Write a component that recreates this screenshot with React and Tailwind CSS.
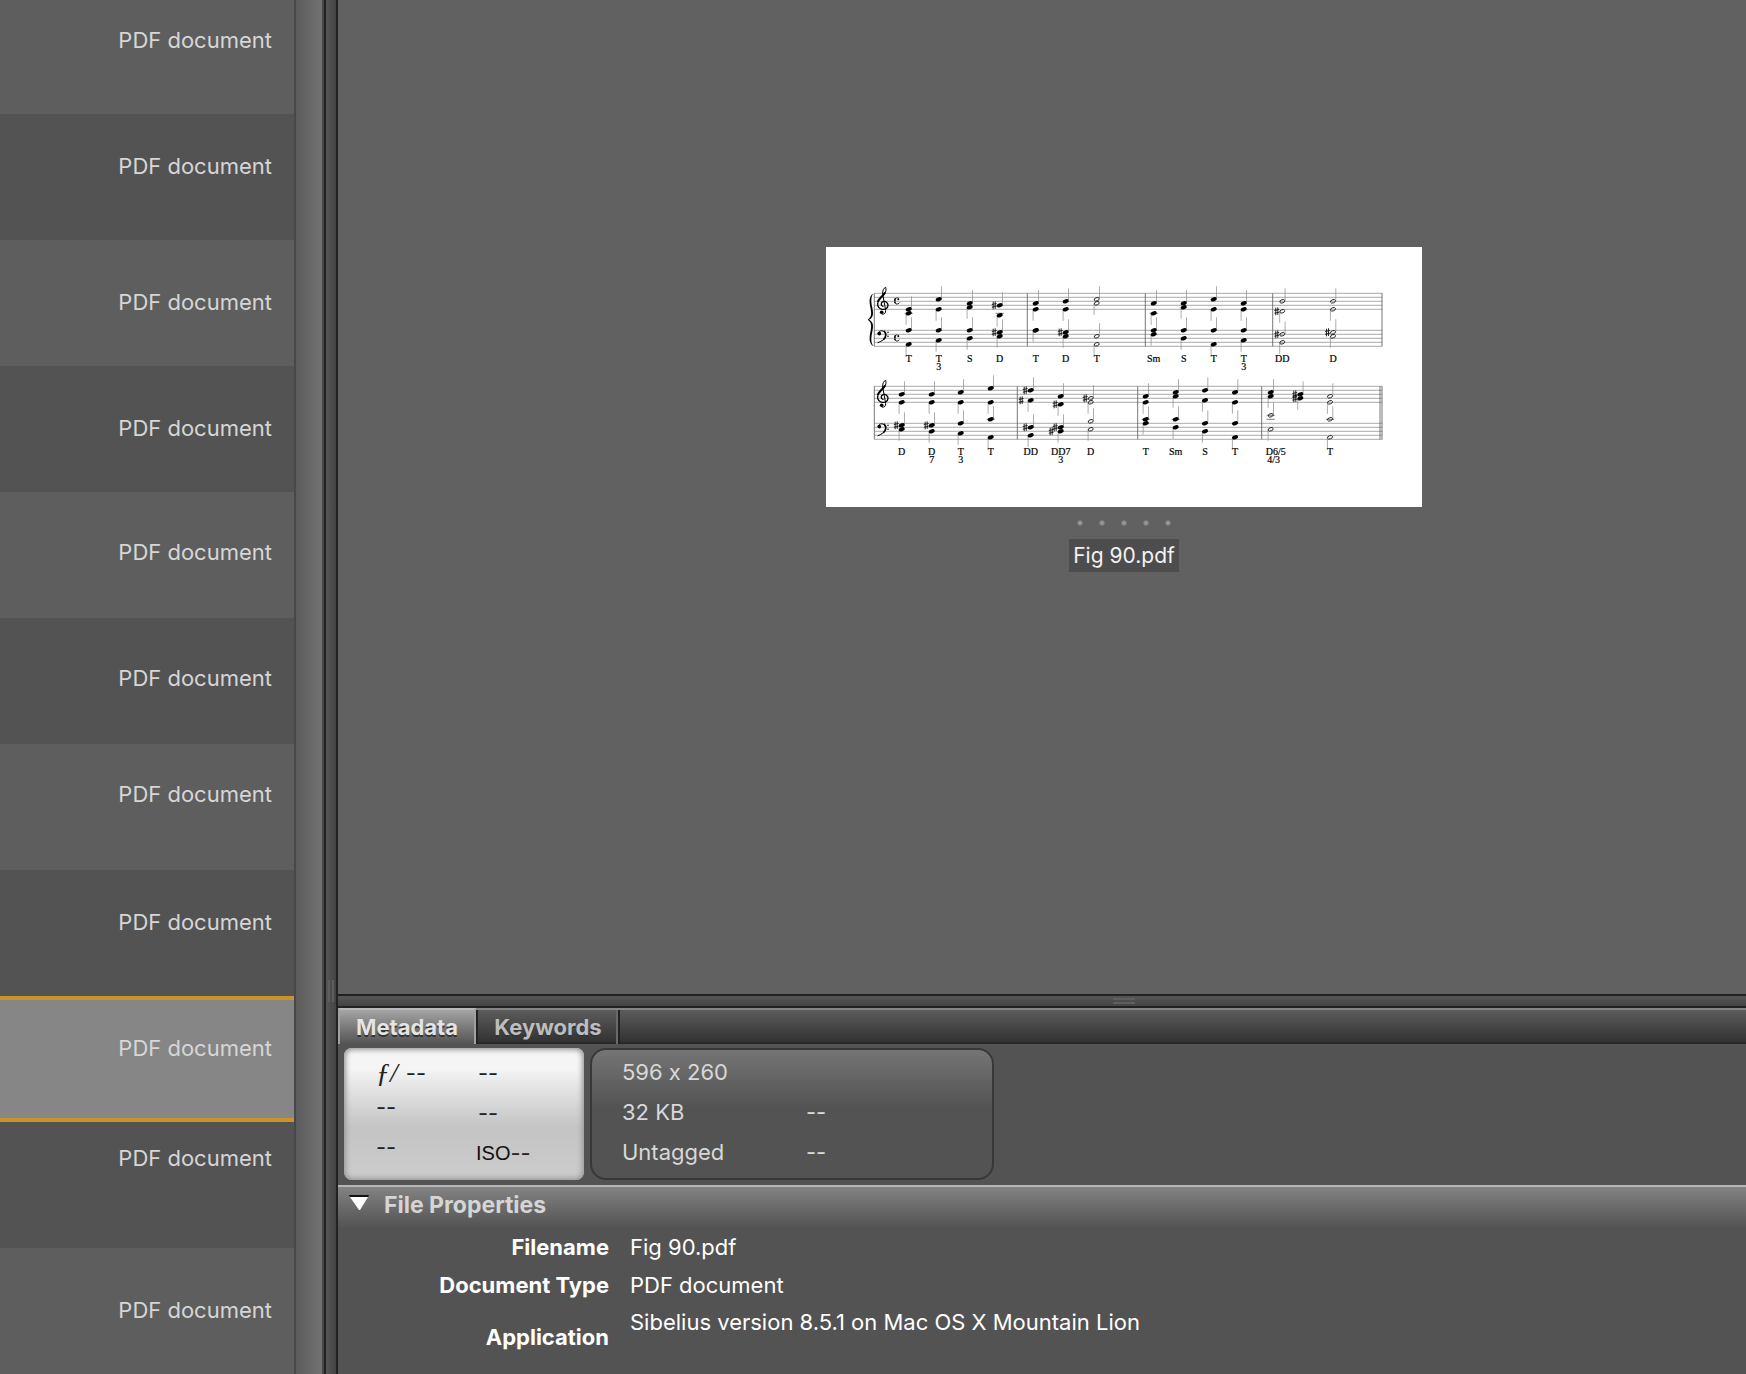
import React from 'react'
import clsx from 'clsx'

const rows = [
    { id: 1, pad: "pt-[40px]", shade: "bg-[#5e5e5e]" },
    { id: 2, pad: "pt-[40px]", shade: "bg-[#535353]" },
    { id: 3, pad: "pt-[50px]", shade: "bg-[#5e5e5e]" },
    { id: 4, pad: "pt-[50px]", shade: "bg-[#535353]" },
    { id: 5, pad: "pt-[48px]", shade: "bg-[#5e5e5e]" },
    { id: 6, pad: "pt-[48px]", shade: "bg-[#535353]" },
    { id: 7, pad: "pt-[38px]", shade: "bg-[#5e5e5e]" },
    { id: 8, pad: "pt-[40px]", shade: "bg-[#535353]" },
    { id: 9, pad: "pt-[36px]", selected: true },
    { id: 10, pad: "pt-[24px]", shade: "bg-[#535353]" },
    { id: 11, pad: "pt-[50px]", shade: "bg-[#5e5e5e]" },
]

// Each chord: x, treble [upper, lower], bass [upper, lower], labels.
// A note is its position below the top line in half spaces; '#' marks a sharp, '##' a sharp set further left.
const systems = [
    {
        top: 46.3,
        bars: [201.3, 319.3, 446.7, 556],
        chords: [
            { x: 82.7, t: [[8], [10]], b: [[0], [7]], l: ["T"] },
            { x: 112.7, t: [[3], [8]], b: [[0], [5]], l: ["T", "3"] },
            { x: 143.7, t: [[5], [7]], b: [[0], [4]], l: ["S"] },
            { x: 173.7, t: [[6, "#"], [11]], b: [[1, "#"], [3]], l: ["D"] },
            { x: 209.7, t: [[5], [8]], b: [[0], [0]], l: ["T"], bassDown: true },
            { x: 239.7, t: [[4], [8]], b: [[1, "#"], [3]], l: ["D"] },
            { x: 270.7, half: true, t: [[3], [5]], b: [[3], [7]], l: ["T"] },
            { x: 327.7, t: [[5], [10]], b: [[0], [2]], l: ["Sm"] },
            { x: 357.7, t: [[5], [7]], b: [[0], [4]], l: ["S"] },
            { x: 387.7, t: [[3], [8]], b: [[0], [7]], l: ["T"] },
            { x: 417.7, t: [[5], [8]], b: [[0], [5]], l: ["T", "3"] },
            { x: 456.3, half: true, t: [[4], [9, "#"]], b: [[2, "#"], [6]], l: ["DD"] },
            { x: 507, half: true, t: [[4], [8]], b: [[1, "#"], [3]], l: ["D"] },
        ],
    },
    {
        top: 139.3,
        bars: [191.3, 311.7, 435.7, 554, 556],
        chords: [
            { x: 75.7, t: [[4], [8]], b: [[1, "#"], [3]], l: ["D"] },
            { x: 105.7, t: [[4], [8]], b: [[1, "#"], [4]], l: ["D", "7"] },
            { x: 134.7, t: [[3], [8]], b: [[0], [5]], l: ["T", "3"] },
            { x: 164.7, t: [[1], [8]], b: [[-2], [7]], l: ["T"] },
            { x: 204.7, t: [[2, "#"], [7, "##"]], b: [[2, "#"], [6]], l: ["DD"] },
            { x: 234.7, t: [[5], [9, "#"]], b: [[2, "#"], [4, "##"]], l: ["DD7", "3"] },
            { x: 264.7, half: true, t: [[6, "#"], [8]], b: [[-1], [3]], l: ["D"] },
            { x: 319.7, t: [[5], [8]], b: [[-2], [0]], l: ["T"] },
            { x: 349.7, t: [[3], [5]], b: [[-2], [2]], l: ["Sm"] },
            { x: 379, t: [[2], [7]], b: [[0], [4]], l: ["S"] },
            { x: 409, t: [[3], [8]], b: [[0], [7]], l: ["T"] },
            { x: 444.7, half: true, filledTop: true, t: [[3], [5]], b: [[-4], [3]], l: ["D6/5", "4/3"] },
            { x: 474.3, t: [[4, "#"], [6, "#"]], b: [null, null], l: [] },
            { x: 504, half: true, t: [[5], [8]], b: [[-2], [7]], l: ["T"] },
        ],
    },
]

function Sharp({ x, y }) {
    return (
        <path
            d={`M${x - 1} ${y - 3.6}v7.6M${x + 1} ${y - 4}v7.6M${x - 2.4} ${y - 0.8}l4.8-1M${x - 2.4} ${y + 1.9}l4.8-1`}
            stroke="#111"
            strokeWidth="0.9"
        />
    )
}

function Note({ x, top, note, up, half, stem = true }) {
    if (!note) return null
    const [pos, sharp] = note
    const y = top + pos * 2
    const ledgers = [-4, -2, 10].filter((p) => (p < 0 ? pos <= p : pos >= p))
    return (
        <g>
            {stem && (
                <path
                    d={up ? `M${x + 2.8} ${y - 0.5}v-12.5` : `M${x - 2.6} ${y + 0.5}v11`}
                    stroke="#8a8a8a"
                    strokeWidth="0.7"
                />
            )}
            {ledgers.map((p) => (
                <path key={p} d={`M${x - 4} ${top + p * 2}h8`} stroke="#444" strokeWidth="0.7" />
            ))}
            <ellipse
                cx={x}
                cy={y}
                rx={half ? 2.6 : 3.1}
                ry={half ? 1.6 : 2}
                transform={`rotate(-20 ${x} ${y})`}
                fill={half ? "none" : "#000"}
                stroke={half ? "#222" : "none"}
                strokeWidth="0.9"
            />
            {sharp && <Sharp x={x - (sharp === "##" ? 9.5 : 5.5)} y={y} />}
        </g>
    )
}

function Clefs({ dy }) {
    return (
        <g transform={`translate(-6 ${dy - 7}) scale(0.3333)`} fill="none" stroke="#000" strokeLinecap="round">
            <path d="M189 199c-6-1-8-11 0-14 9-3 16 5 15 12-1 9-10 12-17 11-9-1-15-9-14-18" strokeWidth="4" />
            <path d="M173 190c1-12 14-17 21-28 4-7 5-14 3-20-6 2-10 10-9 20l9 49c1 8-4 12-9 12" strokeWidth="3" />
            <path d="M174 184c4-9 14-15 20-25" strokeWidth="6" />
            <circle cx="185" cy="217" r="5.5" fill="#000" stroke="none" />
            <path d="M174 280c2-11 22-11 23 5 0 12-11 18-23 23" strokeWidth="3" />
            <path d="M193 274c7 6 5 18-2 24" strokeWidth="5" />
            <circle cx="178" cy="281" r="5.5" fill="#000" stroke="none" />
            <circle cx="204" cy="277" r="2.3" fill="#000" stroke="none" />
            <circle cx="204" cy="289" r="2.3" fill="#000" stroke="none" />
        </g>
    )
}

function Score() {
    return (
        <svg width="596" height="260" viewBox="0 0 596 260" className="block bg-white" role="img" aria-label="Fig 90.pdf">
            {/* brace and time signatures, first system only */}
            <g transform="translate(-6 -7) scale(0.3333)">
                <path d="M161 160c-16 8-13 28-9 46 3 16 2 26-9 33 11 7 12 17 9 33-4 18-7 38 9 47-9-10-8-26-4-44 4-18 3-30-10-36 13-6 14-18 10-36-4-17-5-33 4-43z" />
                {[0, 111].map((dy) => (
                    <g key={dy} transform={`translate(0 ${dy})`}>
                        <path d="M236 175c-5-4-12-1-12 8 0 10 9 12 14 5" fill="none" stroke="#000" strokeWidth="3" />
                        <path d="M225 175v15" stroke="#000" strokeWidth="4" />
                        <circle cx="235" cy="178" r="3" />
                    </g>
                ))}
            </g>
            {systems.map(({ top, bars, chords }) => (
                <g key={top}>
                    {[0, 4, 8, 12, 16, 37, 41, 45, 49, 53].map((dy) => (
                        <path key={dy} d={`M48.3 ${top + dy}H556.3`} stroke="#858585" strokeWidth="0.7" />
                    ))}
                    {[48.3, ...bars].map((x) => (
                        <path key={x} d={`M${x} ${top}v53`} stroke="#555" strokeWidth="0.8" />
                    ))}
                    <Clefs dy={top - 46.3} />
                    {chords.map(({ x, half, filledTop, bassDown, t, b, l }) => (
                        <g key={x}>
                            <Note x={x} top={top} note={t[0]} half={half && !filledTop} up />
                            <Note x={x} top={top} note={t[1]} half={half && !filledTop} />
                            <Note x={x} top={top + 37} note={b[0]} half={half} up stem={!bassDown} />
                            <Note x={x} top={top + 37} note={b[1]} half={half} />
                            {l.map((text, i) => (
                                <text
                                    key={text}
                                    x={l[0] === "D6/5" ? x + 5 - i * 2 : x}
                                    y={top + 68.5 + i * 8}
                                    textAnchor="middle"
                                    fontSize="10"
                                    fill="#000"
                                    stroke="#000"
                                    strokeWidth="0.2"
                                    className="font-['Liberation_Serif']"
                                >
                                    {text}
                                </text>
                            ))}
                        </g>
                    ))}
                </g>
            ))}
        </svg>
    )
}

function FileList() {
    return (
        <ul className="-mt-3 w-[294px] shrink-0 text-right text-[#d6d6d6]">
            {rows.map(({ id, pad, shade, selected }) => (
                <li
                    key={id}
                    className={clsx(
                        "h-[126px] pr-[22px]",
                        pad,
                        selected ? "border-y-4 border-[#c79429] bg-[#868686]" : shade
                    )}
                >
                    PDF document
                </li>
            ))}
        </ul>
    )
}

function Preview() {
    return (
        <section className="flex grow flex-col items-center bg-[#616161] pt-[247px] pl-[164px]">
            <Score />
            <div className="mt-3 flex gap-[16px] py-px" aria-hidden="true">
                {[1, 2, 3, 4, 5].map((n) => (
                    <span key={n} className="size-[6px] rounded-full border border-[#777] bg-[#979797]" />
                ))}
            </div>
            <div className="mt-[12px] bg-[#4d4d4d] px-1 pt-px text-[21px] leading-8 text-[#f2f2f2]">Fig 90.pdf</div>
        </section>
    )
}

function Tabs() {
    return (
        <div className="flex h-9 border-t-2 border-[#858585] bg-linear-to-b from-[#5c5c5c] to-[#303030] font-bold shadow-[inset_0_-2px_0_0_#292929]">
            <button className="-mt-0.5 w-[138px] border-2 border-b-0 border-[#b8b8b8] border-r-[#a0a0a0] border-l-[#a0a0a0] bg-linear-to-b from-[#a5a5a5] to-[#545454] text-[#e4e4e4] [text-shadow:0_2px_0_#333]">
                Metadata
            </button>
            <button className="w-[144px] border-x-2 border-[#222] text-[#bdbdbd] shadow-[inset_-2px_0_0_#6a6a6a] [text-shadow:0_2px_0_#333]">
                Keywords
            </button>
        </div>
    )
}

function Placard() {
    return (
        <div className="flex gap-[6px] px-[6px] pt-1 pb-[5px]">
            <div className="flex h-[132px] w-[240px] rounded-lg bg-linear-to-b from-[#f5f5f5] from-15% via-[#c4c4c4] via-60% to-[#cccccc] pt-[5px] text-[#222] shadow-[inset_0_0_5px_2px_#999]">
                <div className="w-[132px] pl-[32px]">
                    <div className="flex h-[36px] gap-[8px] leading-10">
                        <span className="font-['Liberation_Serif'] text-[28px] italic">ƒ/</span>
                        <span>--</span>
                    </div>
                    <div className="h-10 leading-9">--</div>
                    <div className="leading-9">--</div>
                </div>
                <div className="leading-10">
                    <div className="pl-[2px]">--</div>
                    <div className="pl-[2px]">--</div>
                    <div className="flex">
                        <span className="font-['Liberation_Sans_Narrow','Liberation_Sans'] text-[20px] text-[#111]">ISO</span>
                        <span>--</span>
                    </div>
                </div>
            </div>
            <div className="grid h-[132px] w-[404px] grid-cols-[184px_1fr] content-start rounded-2xl border-2 border-[#383838] bg-linear-to-b from-[#757575] to-[#535353] to-45% pt-[2px] pl-[30px] leading-10 text-[#d8d8d8]">
                <span className="col-span-2">596 x 260</span>
                <span>32 KB</span>
                <span>--</span>
                <span>Untagged</span>
                <span>--</span>
            </div>
        </div>
    )
}

function FileProperties() {
    return (
        <section className="h-[189px] border-t-2 border-[#b5b5b5] text-white">
            <h2 className="flex h-[41px] items-start bg-linear-to-b from-[#838383] to-[#535353] pl-[10px] text-[23px] font-bold leading-9 text-[#d5d5d5]">
                <svg width="22" height="18" viewBox="0 0 22 18" className="mt-[7px] mr-[14px]" aria-hidden="true">
                    <path d="M1 1h20l-1 2H2z" fill="#111" />
                    <path d="M2 3h18l-8 13h-1z" fill="#fff" />
                </svg>
                File Properties
            </h2>
            <table>
                <tbody>
                    <tr className="h-[38px]">
                        <th className="w-[271px] p-0 text-right">Filename</th>
                        <td className="p-0 pl-[21px]">Fig 90.pdf</td>
                    </tr>
                    <tr className="h-[38px]">
                        <th className="p-0 text-right">Document Type</th>
                        <td className="p-0 pl-[21px]">PDF document</td>
                    </tr>
                    <tr className="h-[66px]">
                        <th className="p-0 text-right">Application</th>
                        <td className="p-0 pt-[6px] pl-[21px] align-top">Sibelius version 8.5.1 on Mac OS X Mountain Lion</td>
                    </tr>
                </tbody>
            </table>
        </section>
    )
}

function App() {
    return (
        <div className="flex h-screen overflow-hidden bg-[#535353] font-['Inter',sans-serif] text-[22px] leading-6 [font-feature-settings:'calt'_0]">
            <FileList />
            {/* scroll track */}
            <div className="w-[30px] shrink-0 border-x-2 border-[#484848] bg-linear-to-r from-[#5b5b5b] to-[#737373]" />
            {/* vertical splitter */}
            <div className="w-[14px] shrink-0 border-x-2 border-[#222] bg-linear-to-r from-[#565656] to-[#444] pt-[980px] pl-[2px]">
                <div className="h-[22px] w-[6px] border-x-2 border-[#5e5e5e]" />
            </div>
            <main className="flex min-w-0 grow flex-col">
                <Preview />
                {/* horizontal splitter */}
                <div className="flex h-[14px] shrink-0 items-center justify-center border-y-2 border-[#222] bg-linear-to-b from-[#565656] to-[#444] pl-[164px]">
                    <div className="h-[6px] w-[22px] border-y-2 border-[#5e5e5e]" />
                </div>
                <Tabs />
                <Placard />
                <FileProperties />
            </main>
        </div>
    )
}

export default App
